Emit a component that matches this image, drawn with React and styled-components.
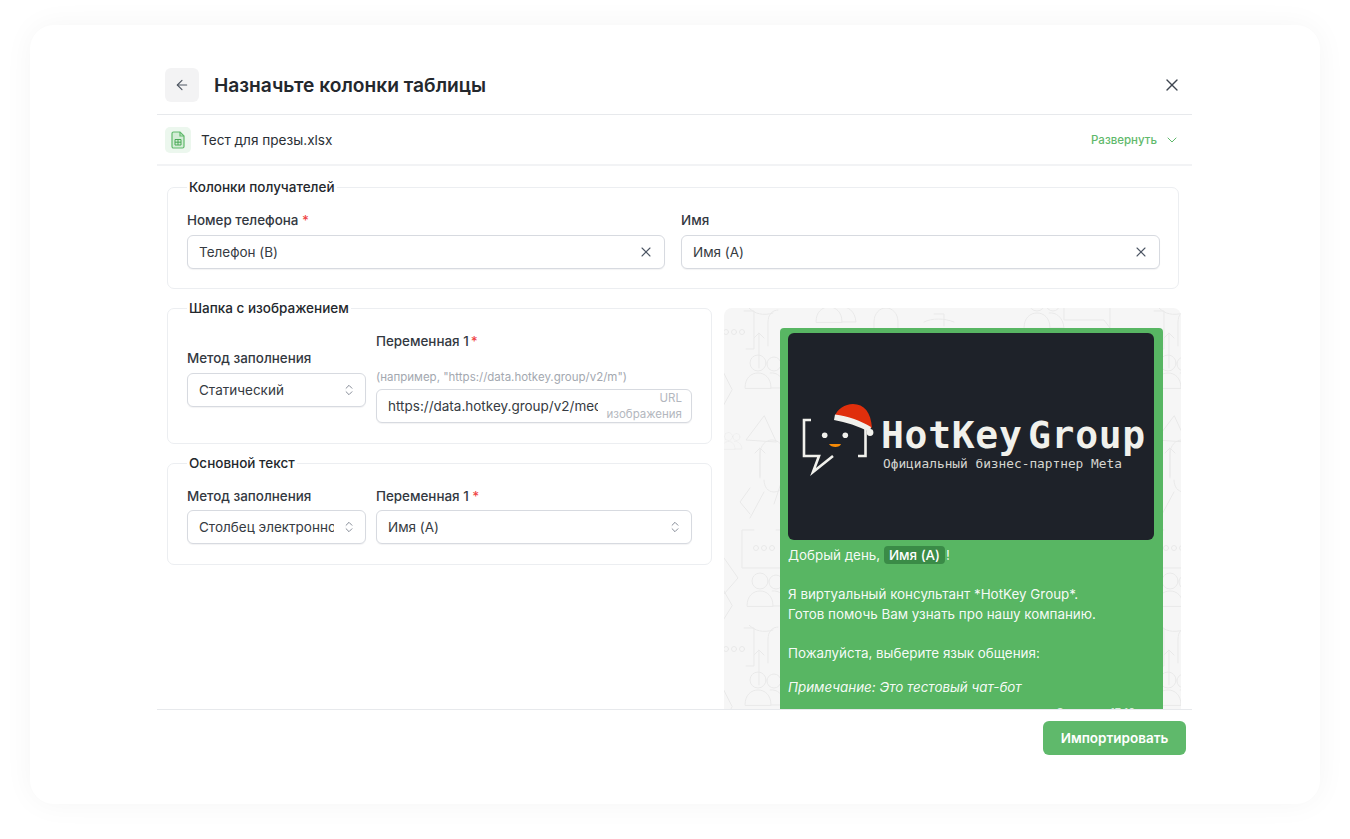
import React from 'react';
import styled, { createGlobalStyle } from 'styled-components';
import { ArrowLeft, X, ChevronDown, ChevronsUpDown } from 'lucide-react';

const GlobalStyle = createGlobalStyle`
  html, body {
    margin: 0;
    padding: 0;
    background: #fff;
    font-family: Inter, "Noto Sans", sans-serif;
    color: #1f2328;
  }
  * { box-sizing: border-box; }
`;

const Page = styled.div`
  width: 1350px;
  height: 839px;
  padding: 25px 30px 35px;
  overflow: hidden;
`;

const Card = styled.div`
  height: 779px;
  padding: 43px 128px 0 127px;
  display: flex;
  flex-direction: column;
  background: #fff;
  border-radius: 24px;
  box-shadow: 0 0 30px rgba(0, 0, 0, 0.045);
`;

const Header = styled.div`
  height: 47px;
  flex: none;
  padding: 0 10px 12px 8px;
  display: flex;
  align-items: center;
  gap: 15px;
  border-bottom: 1px solid #e7e9ec;
`;

const BackButton = styled.div`
  width: 34px;
  height: 34px;
  display: flex;
  align-items: center;
  justify-content: center;
  border-radius: 6px;
  background: #f3f3f4;
  color: #4f5762;
`;

const Title = styled.h1`
  flex: 1;
  margin: 0;
  font-size: 19.2px;
  line-height: 34px;
  font-weight: 600;
  color: #24282d;
`;

const CloseIcon = styled(X)`
  color: #3f4650;
`;

const FileRow = styled.div`
  height: 51px;
  flex: none;
  padding: 0 12px 0 8px;
  display: flex;
  align-items: center;
  gap: 10px;
  border-bottom: 2px solid #f2f3f5;
`;

const FileBadge = styled.div`
  width: 26px;
  height: 26px;
  display: flex;
  align-items: center;
  justify-content: center;
  border-radius: 5px;
  background: #ecf7ee;
`;

const FileName = styled.span`
  flex: 1;
  font-size: 13.6px;
  color: #2b2f35;
`;

const Expand = styled.span`
  display: flex;
  align-items: center;
  gap: 7px;
  font-size: 11.5px;
  font-weight: 500;
  color: #5fb96b;
`;

const Body = styled.div`
  flex: 1;
  min-height: 0;
  padding: 12px 11px 0 10px;
  display: flex;
  flex-direction: column;
  gap: 10px;
  border-bottom: 1px solid #e7e9ec;
`;

const Group = styled.fieldset`
  margin: 0;
  min-width: 0;
  padding: 14px 19px 20px;
  border: 1px solid #eceef1;
  border-radius: 7px;
`;

const TopGroup = styled(Group)`
  margin-right: 2px;
  padding-bottom: 19px;
  flex: none;
`;

const Legend = styled.legend`
  margin-left: 0;
  padding: 0 2px;
  font-size: 13.5px;
  line-height: 18px;
  font-weight: 500;
  color: #24282d;
`;

const Fields = styled.div`
  display: grid;
  grid-template-columns: ${(p) => p.$columns};
  column-gap: ${(p) => p.$gap};
  align-items: center;
`;

const Field = styled.div`
  min-width: 0;
  display: flex;
  flex-direction: column;
`;

const Label = styled.label`
  height: 20px;
  margin-bottom: ${(p) => p.$below || '4px'};
  font-size: 13.4px;
  line-height: 20px;
  font-weight: 450;
  color: #33383f;
`;

const Required = styled.span`
  margin-left: ${(p) => p.$left || '0'};
  color: #ef4444;
`;

const Hint = styled.div`
  height: 16px;
  margin-top: 18px;
  margin-bottom: 4px;
  font-size: 11.5px;
  line-height: 16px;
  color: #a3a8b0;
  white-space: nowrap;
`;

const Control = styled.div`
  height: 34px;
  padding: 0 ${(p) => p.$right || '10px'} 0 11px;
  display: flex;
  align-items: center;
  gap: 8px;
  background: #fff;
  border: 1px solid #d7dae0;
  border-radius: 6px;
  box-shadow: 0 1px 1px rgba(16, 24, 40, 0.05);
  font-size: 13.5px;
  color: #363b42;
`;

const Value = styled.span`
  flex: 1;
  min-width: 0;
  overflow: hidden;
  white-space: nowrap;
`;

const UrlSuffix = styled.span`
  flex: none;
  width: 76px;
  font-size: 11.5px;
  line-height: 16.5px;
  text-align: right;
  color: #b3b7be;
`;

const ClearIcon = styled(X)`
  flex: none;
  color: #4b5563;
`;

const SortIcon = styled(ChevronsUpDown)`
  flex: none;
  color: #6b7280;
`;

const Split = styled.div`
  flex: 1;
  min-height: 0;
  display: grid;
  grid-template-columns: 545px 457px;
  column-gap: 12px;
`;

const Forms = styled.div`
  display: flex;
  flex-direction: column;
  gap: 10px;
`;

const Preview = styled.div`
  position: relative;
  margin-top: 9px;
  padding: 20px 18px 0 56px;
  overflow: hidden;
  border-radius: 8px 8px 0 0;
  background: #f6f6f6;
`;

const Doodles = styled.svg`
  position: absolute;
  inset: 0;
  width: 100%;
  height: 100%;
`;

const Bubble = styled.div`
  position: relative;
  padding: 5px 9px 0 8px;
  background: #58b663;
  border-radius: 4px 4px 0 0;
  color: rgba(255, 255, 255, 0.96);
  font-size: 13.4px;
  line-height: 19.5px;
`;

const BannerImage = styled.div`
  height: 207px;
  padding-top: 7px;
  display: flex;
  align-items: center;
  background: #1e2229;
  border-radius: 6px;
`;

const LogoMark = styled.svg`
  flex: none;
  width: 93px;
  height: 90px;
`;

const LogoText = styled.div`
  margin-top: 4px;
  display: flex;
  flex-direction: column;
  font-family: "DejaVu Sans Mono", "Liberation Mono", monospace;
  white-space: nowrap;
`;

const LogoName = styled.span`
  font-size: 38px;
  line-height: 42px;
  font-weight: 700;
  letter-spacing: 0.7px;
  word-spacing: -18px;
  color: #f1f1ec;
`;

const LogoSub = styled.span`
  margin-left: 2px;
  font-size: 12.8px;
  line-height: 15px;
  color: #d6d6d1;
`;

const Message = styled.p`
  margin: ${(p) => p.$top || '19.5px'} 0 0;
`;

const Chip = styled.span`
  display: inline-block;
  margin: 0 1px 0 0;
  padding: 0 5px;
  border-radius: 4px;
  background: #3a8b47;
  font-weight: 500;
  line-height: 18px;
  color: #fff;
`;

const Note = styled.p`
  margin: 14.5px 0 0;
  font-style: italic;
`;

const Meta = styled.div`
  margin-top: 6px;
  text-align: right;
  font-size: 11px;
  word-spacing: 6px;
  color: rgba(255, 255, 255, 0.75);
`;

const Footer = styled.div`
  flex: none;
  padding: 11px 6px 49px 0;
  display: flex;
  justify-content: flex-end;
`;

const ImportButton = styled.button`
  width: 143px;
  height: 34px;
  padding: 0;
  border: 0;
  border-radius: 6px;
  background: #5fb96b;
  font-family: inherit;
  font-size: 13.5px;
  font-weight: 600;
  color: #fff;
`;

const Users = ({ x, y, s = 1 }) => (
  <g transform={`translate(${x} ${y}) scale(${s})`}>
    <circle cx="13" cy="9" r="8" />
    <path d="M0 34c0-10 6-15 13-15s13 5 13 15z" />
    <circle cx="29" cy="10" r="7" />
    <path d="M25 19c7-1 14 4 15 15H26" />
  </g>
);

const Clip = ({ x, y }) => (
  <path transform={`translate(${x} ${y})`} d="M0 36V14C0 5 6 0 12 0s12 5 12 14v26c0 7-4 12-10 12S4 47 4 40" />
);

const Bracket = ({ x, y }) => (
  <g transform={`translate(${x} ${y})`}>
    <path d="M12 0H0v38h40l6 8V0H34" />
    <circle cx="14" cy="18" r="2.5" />
    <circle cx="22" cy="18" r="2.5" />
    <circle cx="30" cy="18" r="2.5" />
  </g>
);

const DoodleLayer = () => (
  <Doodles aria-hidden="true">
    <defs>
      <pattern id="doodle" width="410" height="317" patternUnits="userSpaceOnUse">
        <g fill="none" stroke="#e9e9e9" strokeWidth="1" strokeLinejoin="round" strokeLinecap="round">
          <circle cx="2" cy="24" r="2.5" />
          <circle cx="10" cy="24" r="2.5" />
          <circle cx="18" cy="24" r="2.5" />
          <path d="M20 3h10v38H22" />
          <path d="M35 60V25l-5 5m5-5 5 5" />
          <path d="M44 38V14c0-7 4-12 10-12" />
          <Users x={21} y={46} />
          <path d="M40 108l-18 24 30 2z" />
          <path d="M-2 62v38l10-18z" />
          <Users x={-2} y={124} s={0.5} />
          <path d="M36 170v-30l-5 5m5-5 5 5" />
          <Clip x={36} y={132} />
          <path d="M26 180l-10 14 10 12M40 184l-14 26M58 172l-8 24" />
          <path d="M0 250l14 20-14 16" />
          <Bracket x={18} y={222} />
          <Users x={23} y={264} />
          <path d="M-2 280v34l10-16z" />
          <path d="M25 0c6 6 14 8 24 5" />
          <Clip x={150} y={0} />
          <Users x={92} y={-20} />
          <path d="M210 6h10v12M200 14c8-4 20-4 30 0" />
          <Users x={300} y={-14} />
          <Bracket x={340} y={-26} />
        </g>
      </pattern>
    </defs>
    <rect width="100%" height="100%" fill="url(#doodle)" />
  </Doodles>
);

const SheetIcon = () => (
  <svg width="16" height="18" viewBox="0 0 16 18" aria-hidden="true">
    <path d="M2 2.5C2 1.7 2.7 1 3.5 1H10l4 4v10.5c0 .8-.7 1.5-1.5 1.5h-9C2.7 17 2 16.3 2 15.5z" fill="#d3edd6" stroke="#5fb96b" strokeWidth="1.2" />
    <path d="M10 1v4h4" fill="none" stroke="#5fb96b" strokeWidth="1.2" />
    <path d="M5 8.5h6V14H5zM8 8.5V14M5 11.2h6" fill="none" stroke="#4aa957" strokeWidth="1" />
  </svg>
);

const Logo = () => (
  <LogoMark viewBox="-2 0 93 90" aria-hidden="true">
    <path d="M21 25H14V61H29L23 77L43 61" fill="none" stroke="#f1f1ec" strokeWidth="2.6" />
    <path d="M68 61H75.5V34" fill="none" stroke="#f1f1ec" strokeWidth="2.6" />
    <path d="M45 21C47 14 55 9 63 9C74 9 81 17 82 33L72 28Z" fill="#e02f0c" />
    <path d="M45 19.5C58 21 71 26 81 32L80 37C68 31 56 27 44 25Z" fill="#f1f1ec" />
    <circle cx="80" cy="37.5" r="3.4" fill="#f1f1ec" />
    <circle cx="34.7" cy="40.3" r="2.8" fill="#f1f1ec" />
    <circle cx="55.3" cy="40.3" r="2.8" fill="#f1f1ec" />
    <path d="M39 49H51C50 53 41 53 39 49Z" fill="#f58a07" />
  </LogoMark>
);

const App = () => (
  <Page>
    <GlobalStyle />
    <Card>
      <Header>
        <BackButton>
          <ArrowLeft size={16} strokeWidth={1.7} />
        </BackButton>
        <Title>Назначьте колонки таблицы</Title>
        <CloseIcon size={20} strokeWidth={1.6} />
      </Header>
      <FileRow>
        <FileBadge>
          <SheetIcon />
        </FileBadge>
        <FileName>Тест для презы.xlsx</FileName>
        <Expand>
          Развернуть
          <ChevronDown size={16} strokeWidth={1.5} />
        </Expand>
      </FileRow>
      <Body>
        <TopGroup>
          <Legend>Колонки получателей</Legend>
          <Fields $columns="478px 479px" $gap="16px">
            <Field>
              <Label $below="5px">
                Номер телефона <Required>*</Required>
              </Label>
              <Control>
                <Value>Телефон (B)</Value>
                <ClearIcon size={16} strokeWidth={1.6} />
              </Control>
            </Field>
            <Field>
              <Label $below="5px">Имя</Label>
              <Control>
                <Value>Имя (A)</Value>
                <ClearIcon size={16} strokeWidth={1.6} />
              </Control>
            </Field>
          </Fields>
        </TopGroup>
        <Split>
          <Forms>
            <Group>
              <Legend>Шапка с изображением</Legend>
              <Fields $columns="179px 316px" $gap="10px">
                <Field>
                  <Label $below="5px">Метод заполнения</Label>
                  <Control $right="9px">
                    <Value>Статический</Value>
                    <SortIcon size={14} strokeWidth={1.4} />
                  </Control>
                </Field>
                <Field>
                  <Label $below="0">
                    Переменная 1<Required $left="2px">*</Required>
                  </Label>
                  <Hint>(например, "https://data.hotkey.group/v2/m")</Hint>
                  <Control $right="9px">
                    <Value>https://data.hotkey.group/v2/media/header.png</Value>
                    <UrlSuffix>URL изображения</UrlSuffix>
                  </Control>
                </Field>
              </Fields>
            </Group>
            <Group>
              <Legend>Основной текст</Legend>
              <Fields $columns="179px 316px" $gap="10px">
                <Field>
                  <Label>Метод заполнения</Label>
                  <Control $right="9px">
                    <Value>Столбец электронной таблицы</Value>
                    <SortIcon size={14} strokeWidth={1.4} />
                  </Control>
                </Field>
                <Field>
                  <Label>
                    Переменная 1 <Required>*</Required>
                  </Label>
                  <Control $right="9px">
                    <Value>Имя (A)</Value>
                    <SortIcon size={14} strokeWidth={1.4} />
                  </Control>
                </Field>
              </Fields>
            </Group>
          </Forms>
          <Preview>
            <DoodleLayer />
            <Bubble>
              <BannerImage>
                <Logo />
                <LogoText>
                  <LogoName>HotKey Group</LogoName>
                  <LogoSub>Официальный бизнес-партнер Meta</LogoSub>
                </LogoText>
              </BannerImage>
              <Message $top="6px">
                Добрый день, <Chip>Имя (A)</Chip>!
              </Message>
              <Message>
                Я виртуальный консультант *HotKey Group*.
                <br />
                Готов помочь Вам узнать про нашу компанию.
              </Message>
              <Message>Пожалуйста, выберите язык общения:</Message>
              <Note>Примечание: Это тестовый чат-бот</Note>
              <Meta>Сегодня 17:10 ✓</Meta>
            </Bubble>
          </Preview>
        </Split>
      </Body>
      <Footer>
        <ImportButton>Импортировать</ImportButton>
      </Footer>
    </Card>
  </Page>
);

export default App;
